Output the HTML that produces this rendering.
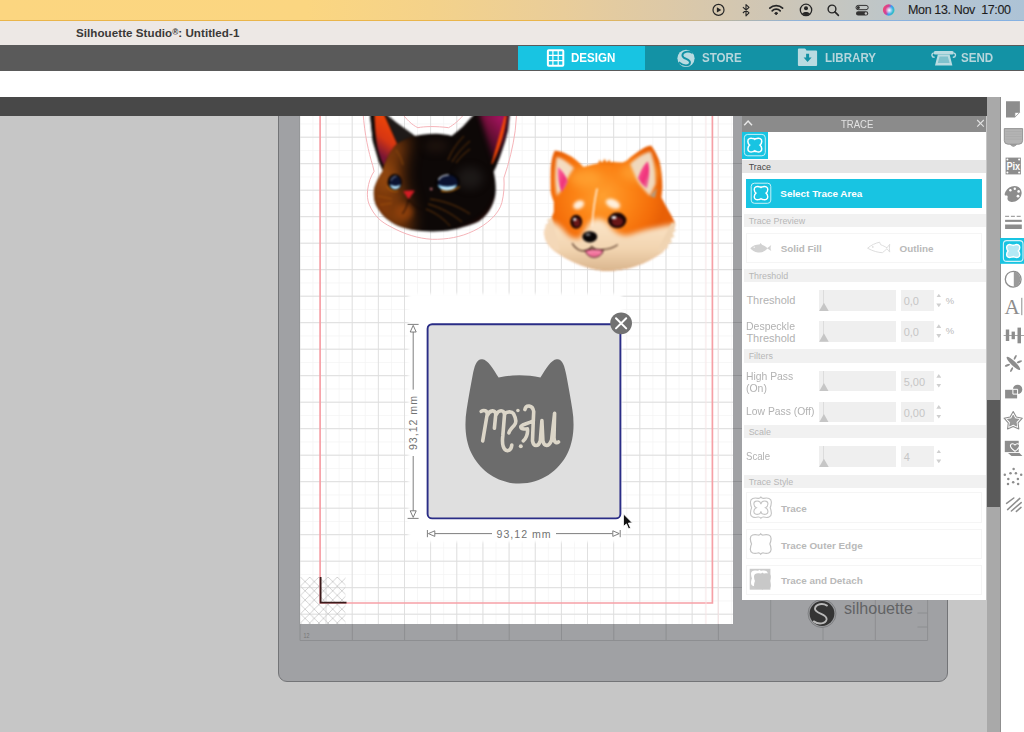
<!DOCTYPE html>
<html lang="en">
<head>
<meta charset="utf-8">
<title>Silhouette Studio: Untitled-1</title>
<style>
*{box-sizing:border-box;margin:0;padding:0}
html,body{width:1024px;height:732px;overflow:hidden;background:#c6c6c6;font-family:"Liberation Sans",sans-serif;}
#root{position:relative;width:1024px;height:732px;overflow:hidden;background:#c6c6c6}
.abs{position:absolute}
#menubar{left:0;top:0;width:1024px;height:21px;background:linear-gradient(90deg,#fcd680 0,#fbd681 30%,#f4d28a 42%,#e9cd9a 55%,#ddc9a7 65%,#cfc6b5 75%,#c0c6c6 85%,#b4c5d3 93%,#adc3d6 100%);border-bottom:1px solid transparent;border-image:linear-gradient(90deg,#eab54a 0,#eab54a 55%,#c9b58a 68%,#8fb3dc 78%,#86b1e2 100%) 1}
#menubar .clock{position:absolute;top:3px;font-size:12.5px;color:#1d1d1d;letter-spacing:-.36px;white-space:nowrap;-webkit-text-stroke:.1px #1d1d1d}
#titlebar{left:0;top:21px;width:1024px;height:24px;background:#ede8e5}
#titlebar span{position:absolute;left:76px;top:5px;font-size:11.6px;font-weight:bold;color:#3a3938;white-space:nowrap;letter-spacing:.05px}
#navbar{left:0;top:45px;width:1024px;height:25.5px;background:#5a5a5a}
#tabs{left:518px;top:45.7px;width:506px;height:24.5px;background:#1392a5}
#tab-design{left:518px;top:45.7px;width:127px;height:24.5px;background:#18c4e2}
.tabtxt{position:absolute;top:50.3px;font-size:13.4px;font-weight:bold;color:#b6d6dc;white-space:nowrap;transform-origin:0 50%;transform:scaleX(.865)}
#toolbar1{left:0;top:70.5px;width:1024px;height:26px;background:#fff}
#toolbar2{left:0;top:96.5px;width:987px;height:19.5px;background:#484848}
#vscroll{left:987px;top:96.5px;width:14px;height:636px;background:#a9a9a9;border-right:1px solid #8f8f8f}
#vthumb{left:987px;top:400px;width:13px;height:107px;background:#5b5b5b}
#righttools{left:1001px;top:96.5px;width:23px;height:636px;background:#fff}
#mat{left:277.9px;top:-20px;width:670.4px;height:702px;background:#a0a1a4;border:1.2px solid #737477;border-radius:0 0 9px 9px}
#page{left:299.5px;top:116px;width:433.5px;height:508px;background:#fff;overflow:hidden}

#panel{left:742px;top:116.3px;width:244.4px;height:483.6px;background:#fff}
#phead{left:0;top:0;width:244.4px;height:15.4px;background:#8b8b8b}
#phead .t{position:absolute;left:99.3px;top:1.6px;font-size:10.6px;color:#e3e3e3;transform-origin:0 50%;transform:scaleX(.9)}
.sec{position:absolute;left:1.5px;width:242px;height:13.2px;background:#f1f1f1;color:#b7b7b7;font-size:8.9px;line-height:14.2px;padding-left:5.2px;white-space:nowrap;overflow:hidden}
.lbl{position:absolute;left:4.4px;font-size:11px;line-height:11.8px;color:#b2b2b2;white-space:nowrap;transform-origin:0 50%}
.lbl i{font-style:normal;display:inline-block;transform-origin:0 50%}
.sl{position:absolute;left:77.3px;width:76.3px;height:20.8px;background:#efefef}
.sl:before{content:"";position:absolute;left:4.2px;top:0;width:1px;height:14px;background:#dcdcdc}
.sl:after{content:"";position:absolute;left:-0.2px;bottom:0;width:9.6px;height:8.4px;background:#c6c6c6;clip-path:polygon(50% 0,100% 100%,0 100%)}
.vb{position:absolute;left:158.9px;width:33.5px;height:20.8px;background:#f0f0f0;color:#c6c6c6;font-size:11px;line-height:23.2px;padding-left:2.8px;white-space:nowrap}
.ar{position:absolute;left:194.3px;width:5px;height:3.8px;background:#cfcfcf}
.ar.u{clip-path:polygon(50% 0,100% 100%,0 100%)}
.ar.d{clip-path:polygon(0 0,100% 0,50% 100%)}
.pct{position:absolute;left:203.8px;font-size:9.4px;color:#b9b9b9;margin-top:1.4px}
.box{position:absolute;left:4.3px;width:236px;background:#fff;border:1px solid #f5f5f5}
.btxt{position:absolute;font-size:9.9px;font-weight:bold;color:#b9b9b9;white-space:nowrap}
</style>
</head>
<body>
<div id="root">
  <div id="mat" class="abs"></div>
  <svg id="matsvg" class="abs" style="left:278.5px;top:-20px" width="669.5" height="702" viewBox="0 0 669.5 702">
    <path d="M21.0 0V660.5M73.3 0V660.5M125.6 0V660.5M177.9 0V660.5M230.2 0V660.5M282.5 0V660.5M334.8 0V660.5M387.1 0V660.5M439.4 0V660.5M491.7 0V660.5M544.0 0V660.5M596.3 0V660.5M648.6 0V660.5M21 660.5H648.6M21 607.5H648.6M21 554.5H648.6M21 501.5H648.6M21 448.5H648.6M21 395.5H648.6M21 342.5H648.6M21 289.5H648.6M21 236.5H648.6M21 183.5H648.6M21 130.5H648.6M21 77.5H648.6M21 24.5H648.6" stroke="#8b8c8f" stroke-width="0.9" fill="none"/>
    <path d="M638.5 633H648.6M638.5 647H648.6" stroke="#8b8c8f" stroke-width="0.9" fill="none"/>
    <text x="24.5" y="657.6" font-size="6.5" fill="#777" font-family="Liberation Sans, sans-serif" textLength="6" lengthAdjust="spacingAndGlyphs">12</text>
    <circle cx="543" cy="633.5" r="14" fill="#9a9b9e" stroke="#77787b" stroke-width="0.8"/>
    <circle cx="543" cy="633.5" r="12.4" fill="#343434"/>
    <path d="M548 625.6C544 623 536.8 623.6 536 628.4C535.2 634 548.4 633.4 547.6 639.4C546.8 644 539.4 644.6 534.8 641.4" fill="none" stroke="#b9b9b9" stroke-width="1.9" stroke-linecap="round"/>
    <text x="565" y="634.3" font-size="16.5" fill="#626365" font-family="Liberation Sans, sans-serif" textLength="69" lengthAdjust="spacingAndGlyphs">silhouette</text>
  </svg>

  <div id="page" class="abs"></div>
  <svg id="pagesvg" class="abs" style="left:299.5px;top:116px" width="433.5" height="508" viewBox="0 0 433.5 508">
    <defs>
      <pattern id="gmin" x="-0.6" y="20.7" width="13.075" height="13.25" patternUnits="userSpaceOnUse">
        <path d="M0.3 0V13.25M0 0.3H13.075" stroke="#f4f4f4" stroke-width="0.9" fill="none"/>
      </pattern>
      <pattern id="gmaj" x="-0.6" y="20.7" width="26.15" height="26.5" patternUnits="userSpaceOnUse">
        <path d="M0.3 0V26.5M0 0.3H26.15" stroke="#dddddd" stroke-width="1.15" fill="none"/>
      </pattern>
      <pattern id="hatch" x="0.5" y="461" width="9.2" height="9.2" patternUnits="userSpaceOnUse">
        <path d="M0 0L9.2 9.2M9.2 0L0 9.2" stroke="#cfcfcf" stroke-width="0.9" fill="none"/>
      </pattern>
      <filter color-interpolation-filters="sRGB" id="soft" x="-10%" y="-10%" width="120%" height="120%"><feGaussianBlur stdDeviation="1.6"/></filter>
    </defs>
    <rect width="433.5" height="508" fill="#fff"/>
    <rect width="433.5" height="508" fill="url(#gmin)"/>
    <rect width="433.5" height="508" fill="url(#gmaj)"/>
    <rect x="0.5" y="461" width="45" height="47" fill="url(#hatch)"/>
    <path d="M20.1 -2V487H412.4V-2" fill="none" stroke="#f6a0a6" stroke-width="1.7"/>
    <path d="M406 0V508M418.3 0V508" stroke="#f9e3e4" stroke-width="0.8" fill="none"/>
    <path d="M20.6 461V486.6H46.5" fill="none" stroke="#3a1a1a" stroke-width="1.8"/>
    <rect x="108.5" y="177.6" width="213.5" height="248.4" fill="#fff" filter="url(#soft)"/>
  </svg>



  <svg id="art" class="abs" style="left:0;top:0" width="1024" height="732" viewBox="0 0 1024 732">
    <defs>
      <filter color-interpolation-filters="sRGB" id="b05" x="-5%" y="-5%" width="110%" height="110%"><feGaussianBlur stdDeviation="0.45"/></filter>
      <filter color-interpolation-filters="sRGB" id="b1" x="-20%" y="-20%" width="140%" height="140%"><feGaussianBlur stdDeviation="1"/></filter>
      <filter color-interpolation-filters="sRGB" id="b2" x="-60%" y="-60%" width="220%" height="220%"><feGaussianBlur stdDeviation="2.4"/></filter>
      <filter color-interpolation-filters="sRGB" id="b8" x="-100%" y="-100%" width="300%" height="300%"><feGaussianBlur stdDeviation="8"/></filter>
      <filter color-interpolation-filters="sRGB" id="b4" x="-100%" y="-100%" width="300%" height="300%"><feGaussianBlur stdDeviation="4.5"/></filter>
      <clipPath id="catclip"><path d="M369.7 112L372.8 141L378.9 161.5L383 170.7C378 178 374 186 373.8 192.2C373.6 198 375 203 376.9 206.6C380 212 383 216 387.1 218.9C392 222.5 396 225 401.5 227C408 229.3 415 230.6 422 231.1C429 231.6 436 231.6 442.5 231.1C450 230.4 457 229 463 227C469 225.2 475 223.4 479.3 220.9C485 217 489 212 491.6 206.6C494 201.5 495.6 196 495.7 190.2C495.8 184 495 178 493.7 171.7C497 165 499.6 158 501.9 151.2C504.4 144.4 506.4 137.6 508 130.7L510.1 112L476.3 112C471.6 117 467.4 121.8 463 126.6C459.4 130 455.6 133 451.7 135.9C446.6 134.6 441.4 134 436.3 133.8C431.5 133.8 426.7 134.2 422 134.8L414.8 135.9C410.4 133 406 130 401.5 126.6C396 122.4 390 118 384 112Z"/></clipPath>
      <linearGradient id="catg" x1="374" y1="0" x2="496" y2="0" gradientUnits="userSpaceOnUse">
        <stop offset="0" stop-color="#5a2808"/><stop offset=".12" stop-color="#6a300a"/><stop offset=".27" stop-color="#341606"/><stop offset=".4" stop-color="#100806"/><stop offset="1" stop-color="#0b0706"/>
      </linearGradient>
      <linearGradient id="earL" x1="392" y1="126" x2="374" y2="150" gradientUnits="userSpaceOnUse">
        <stop offset="0" stop-color="#ea420a"/><stop offset=".5" stop-color="#d63612"/><stop offset="1" stop-color="#7a1636"/>
      </linearGradient>
      <linearGradient id="earR" x1="474" y1="146" x2="506" y2="118" gradientUnits="userSpaceOnUse">
        <stop offset="0" stop-color="#1c0810"/><stop offset=".6" stop-color="#78103e"/><stop offset="1" stop-color="#b0146a"/>
      </linearGradient>
      <radialGradient id="eyeb" cx=".45" cy=".4" r=".6"><stop offset="0" stop-color="#0a1030"/><stop offset=".5" stop-color="#1c4a9a"/><stop offset="1" stop-color="#58b8f0"/></radialGradient>
    </defs>

    <!-- dog -->
    <defs>
      <clipPath id="dogclip"><path d="M554.8 150.5C552 156 550.9 164 550.7 171C550.5 178 550.6 185 550.7 191.5C551.4 195 552.4 198.6 553.8 201.7L553.8 212C552.6 215 551.6 217.6 550.7 220.2C547 224 544.8 228 544.6 232.5C544.6 237 546 241 548.7 244.8C552 249 556 252.4 561 255C567 259 574 262.6 581.5 265.2C588 267.6 595 269.6 602 270.4C609 271 616 270.6 622.5 269.3C630 267.8 637 265.8 643 263.2C651 259.8 658 255.6 663.4 250.9C667.4 246.6 670.2 241.8 671.6 236.6C673.6 231.8 674.9 227 674.7 222.2L671.6 216C668 210 664.6 204 661.4 197.6L662.4 187.4C662.4 178 661.4 169 659.3 160.7C657 154.6 654.2 149.4 651.1 145.4C648 145.8 645.4 146.8 643 148.4C637 151.8 631.6 156 626.6 160.7L622.5 162.6C615.6 161.8 608.8 161.8 602 162.6C595.6 163.6 589.4 165.4 583.5 166.9C579.6 163 575.6 159.6 571.2 156.6C566 153.4 560.6 151.2 554.8 150.5Z"/></clipPath>
      <radialGradient id="dogo" cx="603" cy="196" r="62" gradientUnits="userSpaceOnUse">
        <stop offset="0" stop-color="#ffa030"/><stop offset=".45" stop-color="#fc8416"/><stop offset=".8" stop-color="#f46e0a"/><stop offset="1" stop-color="#e86006"/>
      </radialGradient>
      <linearGradient id="dogc" x1="0" y1="222" x2="0" y2="272" gradientUnits="userSpaceOnUse">
        <stop offset="0" stop-color="#fbe4c6"/><stop offset=".55" stop-color="#f2d4b0"/><stop offset="1" stop-color="#d8b48c"/>
      </linearGradient>
      <linearGradient id="earp" x1="0" y1="0" x2="1" y2="1"><stop offset="0" stop-color="#ff6aa0"/><stop offset=".6" stop-color="#f0307a"/><stop offset="1" stop-color="#e8a0b0"/></linearGradient>
    </defs>
    <g filter="url(#b1)">
      <path d="M554.8 150.5C552 156 550.9 164 550.7 171C550.5 178 550.6 185 550.7 191.5C551.4 195 552.4 198.6 553.8 201.7L553.8 212C552.6 215 551.6 217.6 550.7 220.2C547 224 544.8 228 544.6 232.5C544.6 237 546 241 548.7 244.8C552 249 556 252.4 561 255C567 259 574 262.6 581.5 265.2C588 267.6 595 269.6 602 270.4C609 271 616 270.6 622.5 269.3C630 267.8 637 265.8 643 263.2C651 259.8 658 255.6 663.4 250.9C667.4 246.6 670.2 241.8 671.6 236.6C673.6 231.8 674.9 227 674.7 222.2L671.6 216C668 210 664.6 204 661.4 197.6L662.4 187.4C662.4 178 661.4 169 659.3 160.7C657 154.6 654.2 149.4 651.1 145.4C648 145.8 645.4 146.8 643 148.4C637 151.8 631.6 156 626.6 160.7L622.5 162.6C615.6 161.8 608.8 161.8 602 162.6C595.6 163.6 589.4 165.4 583.5 166.9C579.6 163 575.6 159.6 571.2 156.6C566 153.4 560.6 151.2 554.8 150.5Z" fill="url(#dogo)"/>
      <g clip-path="url(#dogclip)">
        <!-- cream lower face -->
        <path d="M538 222C548 218 556 222 562 228C568 236 574 240 580 238C585 230 588 222 594 219C600 217 606 220 610 226C616 234 624 237 632 234C642 230 656 227 682 223L684 280L536 280Z" fill="url(#dogc)" filter="url(#b2)"/>
        <ellipse cx="640" cy="172" rx="20" ry="10" fill="#ffa838" opacity=".7" filter="url(#b4)"/>
        <ellipse cx="585" cy="178" rx="16" ry="9" fill="#ffa838" opacity=".7" filter="url(#b4)"/>
        <!-- inner ears -->
        <path d="M556.6 157C562 158 568 162 574 168C570 174 566 180 563 188L557 196C554.6 184 554.8 170 556.6 157Z" fill="#f4dcc0" filter="url(#b1)"/>
        <path d="M558 167C562.4 170.6 566 176 567.8 181.6C566.4 185.6 564 189.4 561.4 192C558.8 185 557.6 176 558 167Z" fill="url(#earp)" filter="url(#b05)"/>
        <path d="M630 164C636 158 644 153 650.6 151.6C654 160 655.6 172 655.6 184L650 196C646 192 640 186 636 178Z" fill="#f0d8bc" filter="url(#b1)"/>
        <path d="M638 178C640.6 170 644.6 163.6 647.8 161.4C650 168 649.6 178 647 188.6C643.4 186 640 182 638 178Z" fill="url(#earp)" filter="url(#b05)"/>
        <path d="M650 196L657 188L655 198Z" fill="#b89878"/>
        <!-- brow spots -->
        <ellipse cx="578.6" cy="204.8" rx="5.8" ry="4" fill="#fff0dc" transform="rotate(-28 578.6 204.6)" filter="url(#b1)"/>
        <ellipse cx="613" cy="203.4" rx="7.6" ry="4.4" fill="#fff0dc" transform="rotate(24 612 203.6)" filter="url(#b1)"/>
        <path d="M597 189C594.6 200 593 212 592 226" fill="none" stroke="#fff4e4" stroke-width="1.4" stroke-linecap="round"/>
      </g>
<path d="M552 217L546.5 220.4L550 222L544.6 225.4L548.6 227L543.4 230.4L547.6 232L543.6 236L548 237L545.4 241.6L550 242L548.6 246.6L553.6 246.6L553 250.6L560 250Z" fill="#f4d8b8"/>
      <path d="M672 222L676.4 225L672.6 227L676 231L672 232.6L674.6 237L670.4 238L672 243L667.6 243.6L668 248.6L663.6 248L663 253L657 251Z" fill="#f0d4b2"/>
      <path d="M598 164L599.6 159.8L602 163L604.6 158.8L606.6 162.6L609.6 159.4L610.6 163.4L614.6 161.2L614 165.4Z" fill="#f4780e"/>
      <!-- eyes -->
      <ellipse cx="576.2" cy="221.8" rx="6" ry="7" fill="#1c0606"/>
      <ellipse cx="576.8" cy="222.6" rx="3.4" ry="4.2" fill="#6a1818"/>
      <ellipse cx="574.8" cy="219.4" rx="1.6" ry="1.3" fill="#fff"/>
      <ellipse cx="617.2" cy="220.4" rx="9.2" ry="7.8" fill="#1c0606"/>
      <ellipse cx="617.4" cy="221.6" rx="5.6" ry="4.4" fill="#6a1818"/>
      <ellipse cx="614" cy="217.6" rx="2.6" ry="1.5" fill="#fff"/>
      <!-- nose / mouth -->
      <ellipse cx="589.8" cy="236.8" rx="7.4" ry="5.6" fill="#0a0606"/>
      <ellipse cx="588" cy="234.6" rx="2.6" ry="1.2" fill="#8a8a90"/>
      <path d="M572.2 243.2C575 249 581 251.6 584.3 250.6C588 250 590.6 248.6 591.8 246.6C594 249 597 250.4 601 249.7C608 249.4 614 247.6 617.8 244.6" fill="none" stroke="#4a2a1c" stroke-width="1.2"/>
      <path d="M585 250.8C589 248.8 598 248.6 603.2 250.4C602 258 589 261 585 250.8Z" fill="#f2709a" stroke="#3a1418" stroke-width="0.9"/><path d="M588 253C592 251.4 597 251.4 600.6 252.6" fill="none" stroke="#f8a0bc" stroke-width="1"/>
    </g>
    <!-- cat cut line -->
    <path d="M363 112C364.6 135 368.6 152 372.7 165.5L374.1 171.3C371 176 368.6 182 367.6 190C367 196 367.6 200 369 204C374 216 381 222 391.2 227C404 234 418 238.6 432.2 239.3C447 239.6 461 237 473.2 231.1C487 224.6 499 214 501.9 202.5C504 194 504.4 186 503.9 177.9C509 163 513 147 515.2 130.7L516.8 112M401 112C406 119 412 125 417.9 127.7C424 126.4 436 126 448.6 127.7C454 124.6 459 120.6 466 112" fill="none" stroke="#f6b4b9" stroke-width="1"/>
    <!-- cat -->
    <g filter="url(#b1)">
      <path d="M369.7 112L372.8 141L378.9 161.5L383 170.7C378 178 374 186 373.8 192.2C373.6 198 375 203 376.9 206.6C380 212 383 216 387.1 218.9C392 222.5 396 225 401.5 227C408 229.3 415 230.6 422 231.1C429 231.6 436 231.6 442.5 231.1C450 230.4 457 229 463 227C469 225.2 475 223.4 479.3 220.9C485 217 489 212 491.6 206.6C494 201.5 495.6 196 495.7 190.2C495.8 184 495 178 493.7 171.7C497 165 499.6 158 501.9 151.2C504.4 144.4 506.4 137.6 508 130.7L510.1 112L476.3 112C471.6 117 467.4 121.8 463 126.6C459.4 130 455.6 133 451.7 135.9C446.6 134.6 441.4 134 436.3 133.8C431.5 133.8 426.7 134.2 422 134.8L414.8 135.9C410.4 133 406 130 401.5 126.6C396 122.4 390 118 384 112Z" fill="#0d0807"/>
      <g clip-path="url(#catclip)">
        <!-- brown left face -->
        <path d="M356 168L392 136L410 136C404 156 401 172 404 188C408 204 414 214 410 236L376 236L354 204Z" fill="#7c3a0c" filter="url(#b8)"/>
        <ellipse cx="386" cy="178" rx="9" ry="14" fill="#964a10" opacity=".75" filter="url(#b4)"/>
        <ellipse cx="404" cy="212" rx="9" ry="8" fill="#94420c" opacity=".8" filter="url(#b2)"/>
        <ellipse cx="383" cy="206" rx="7" ry="9" fill="#80380a" opacity=".7" filter="url(#b2)"/>
        <path d="M372 200C376 214 388 224 404 230L380 236L366 214Z" fill="#2a0e04" opacity=".8" filter="url(#b2)"/>
        <!-- left ear -->
        <path d="M368 112L393 112L415.6 135C407 138 401 141 397 143.5C391 149 386 158 382.2 171L378 162L372 141Z" fill="#0e0a09"/><path d="M384 112L393 112L415.6 135C407 138 401 141 397.4 143.2Z" fill="#1e1a18" filter="url(#b05)"/>
        <path d="M374.4 112L383 112L397 143.5C392 148 387 157 383.7 165.5C380 158 377.4 150 376.4 141C375.2 132 374.6 122 374.4 112Z" fill="url(#earL)" filter="url(#b05)"/>
        <!-- right ear -->
        <path d="M479 112L507 112L504 138L494 162C490 150 486 136 479 112Z" fill="url(#earR)" filter="url(#b2)"/>
        <path d="M506.2 116C504 134 498.6 150 492 163.6C495.6 150 500.6 134 505 116Z" fill="#fa4a06" stroke="#fa4a06" stroke-width="1" filter="url(#b05)"/>
        <!-- gloss -->
        <ellipse cx="470" cy="178" rx="13" ry="11" fill="#2c2928" opacity=".5" filter="url(#b4)"/>
        <ellipse cx="436" cy="146" rx="12" ry="6" fill="#2a1a12" opacity=".6" filter="url(#b4)"/>
        <path d="M496 196C492 212 478 224 456 230L470 236L500 214Z" fill="#3a0c06" opacity=".7" filter="url(#b2)"/>
      </g>
      <!-- eyes -->
      <ellipse cx="394.8" cy="182.2" rx="7.2" ry="8.2" fill="#080404"/>
      <path d="M387.4 186Q391 192.6 398 190.4" fill="none" stroke="#c06a0a" stroke-width="1.1"/>
      <ellipse cx="395.2" cy="182.2" rx="5.6" ry="6.6" fill="#0a1230"/>
      <path d="M389.8 184.6Q395.4 187.6 400.6 184.4Q399.6 189.2 394.8 189.2Q390.6 188.8 389.8 184.6Z" fill="#8fd8ff"/>
      <path d="M391.6 186.6Q395.4 188.6 399 186.6" fill="none" stroke="#f2fbff" stroke-width="1"/>
      <path d="M391 180.4Q392 176.8 396 176.2" fill="none" stroke="#aab4c8" stroke-width="1" stroke-linecap="round" opacity=".8"/>
      <ellipse cx="447.4" cy="182.4" rx="12.4" ry="9" fill="#050303" transform="rotate(-6 447.4 182.4)"/>
      <path d="M441 190.6Q451 193.4 459.6 186.6" fill="none" stroke="#c87008" stroke-width="1.2"/>
      <ellipse cx="447.8" cy="182.2" rx="10" ry="7.4" fill="#0a1230"/>
      <path d="M437.6 184.8Q447.6 188.4 457 184.8Q455.6 190.4 446.6 190.6Q439.4 190.2 437.6 184.8Z" fill="#8fd8ff"/>
      <path d="M440.6 187.4Q447.6 190 454.6 187.2" fill="none" stroke="#f2fbff" stroke-width="1.3"/>
      <path d="M438.6 179.6Q441 175.2 448.4 174.8" fill="none" stroke="#d8e0ee" stroke-width="1.3" stroke-linecap="round" opacity=".9"/>
      <circle cx="431.2" cy="189" r="1.2" fill="#d87880"/>
      <!-- nose -->
      <path d="M403.2 191.2C407 190.2 411 190.2 414.8 190.8L408.6 199.2Z" fill="#d41c24"/>
      <path d="M408.4 199C407.4 205 405.4 210 402.4 214M408.4 199C412 205 417 208 422 210" stroke="#120604" stroke-width="0.9" fill="none"/>
      <g fill="none" stroke="#b8620e" stroke-width="0.6" opacity=".9">
        <path d="M430 199C445 201 458 206 470 214M428 204C442 208 452 214 462 222M426 209C436 213 444 219 450 226"/>
        <path d="M448 160C452 150 458 142 464 136M452 162C458 152 464 146 470 141M456 163C460 157 466 152 470 149"/>
        <path d="M396 150C400 155 402 160 403 165M392 199L378 196M392 203L380 205"/>
      </g>
    </g>
  
    <!-- trace selection -->
    <rect x="427.6" y="324.2" width="192.8" height="194.2" rx="4.5" fill="#dfdfdf" stroke="#2a2d86" stroke-width="1.9"/>
    <g filter="url(#b05)">
    <path d="M482.3 359.2C476.6 358.6 474.4 366 472.6 375.4C470.6 386 468.4 398 466.6 410C464.4 424 465 440 471.6 453.6C480 470.6 497.6 483.6 519.4 483.6C541.4 483.6 559 470.6 567.4 453.6C574 440 574.6 424 572.4 410C570.6 398 568.4 386 566.4 375.4C564.6 366 562.4 358.6 556.7 359.2C551 359.8 545.6 369 540.4 377.6C533.6 376 526.6 375.2 519.4 375.2C512.4 375.2 505.4 376 498.6 377.6C493.4 369 488 359.8 482.3 359.2Z" fill="#6c6c6c"/>
    <g fill="none" stroke="#dcd6c8" stroke-width="3.6" stroke-linecap="round" stroke-linejoin="round" aria-label="meow">
      <title>meow</title>
      <path d="M481.2 411.4C483.7 409.6 487.4 410.6 487.2 414.3L482.7 440.9M487.4 415.5C489.5 409.6 496.0 409.2 495.7 415.0L494.4 428.2M496.0 415.0C498.3 409.6 504.4 409.2 504.5 415.0L502.8 436.0C501.8 443.8 503.2 450.9 507.6 450.7C510.0 450.3 511.6 447.7 511.8 445.0M504.5 414.0C507.1 411.1 512.0 411.4 513.6 413.8C515.7 417.7 516.7 422.8 514.1 425.5C512.0 427.7 509.6 430.2 508.9 432.9M524.9 409.6C525.9 404.6 532.7 404.6 533.7 411.6L533.3 420.4L532.5 440.9C533.5 447.0 538.4 447.0 540.3 440.9L541.9 420.6M533.3 420.6C529.6 423.3 523.5 423.9 521.0 426.2C519.8 428.7 524.7 429.4 527.4 428.8C528.2 434.1 525.7 438.9 523.3 440.9M541.9 420.6L542.9 440.9C544.2 447.0 549.3 447.0 551.6 439.9L554.6 413.4L554.0 438.0C554.4 443.0 556.9 443.4 558.5 441.9"/>
    </g>
    <g fill="#dcd6c8"><circle cx="517.9" cy="410.6" r="1.75"/><circle cx="520.8" cy="446.3" r="2"/></g>
    </g>
    <!-- dimension arrows -->
    <g fill="none" stroke="#707070" stroke-width="0.9">
      <path d="M407.6 324.4H418.6M407.6 518.4H418.6M413.2 332V389.6M413.2 456V511"/>
      <path d="M413.2 325.4L410.2 332H416.2Z" fill="#fff"/>
      <path d="M413.2 517.4L410.2 510.8H416.2Z" fill="#fff"/>
      <path d="M427.4 530V537.2M620.2 530V537.2M435 533.6H492M556 533.6H612.6"/>
      <path d="M428.4 533.6L434.8 530.8V536.4Z" fill="#fff"/>
      <path d="M619.2 533.6L612.8 530.8V536.4Z" fill="#fff"/>
    </g>
    <text x="496.6" y="538" font-size="10.6" fill="#727272" font-family="Liberation Sans, sans-serif" textLength="54" lengthAdjust="spacing">93,12 mm</text>
    <text transform="translate(417.4 450) rotate(-90)" font-size="10.6" fill="#727272" font-family="Liberation Sans, sans-serif" textLength="54" lengthAdjust="spacing">93,12 mm</text>
    <!-- close button -->
    <circle cx="621.1" cy="323.3" r="10.9" fill="#727272"/>
    <path d="M616 318.2L626.2 328.4M626.2 318.2L616 328.4" stroke="#fff" stroke-width="2" stroke-linecap="round"/>
    <!-- cursor -->
    <path d="M623.4 513.8L623.4 526.6L626.4 523.9L628.6 529L630.6 528.1L628.4 523.1L632.4 522.9Z" fill="#111" stroke="#fff" stroke-width="0.9" stroke-linejoin="round"/>
  </svg>
<div id="panel" class="abs">
<div id="phead" class="abs"><span class="t">TRACE</span></div>
<div class="abs" id="picon" style="left:0;top:15.4px;width:26px;height:27.2px;background:#18c4e2"></div>
<div class="sec" style="top:43.5px;left:0;width:243.5px;padding-left:6.7px;background:#e5e5e5;color:#4a4a4a">Trace</div>
<div class="abs" id="selbtn" style="left:4.3px;top:62.6px;width:236px;height:29px;background:#18c4e2"><span class="btxt" style="left:34px;top:9.2px;color:#fff">Select Trace Area</span></div>
<div class="sec" style="top:97.9px">Trace Preview</div>
<div class="box" style="top:116.5px;height:30.5px"><span class="btxt" style="left:33.4px;top:9.6px">Solid Fill</span><span class="btxt" style="left:152.2px;top:9.6px">Outline</span></div>
<div class="sec" style="top:152.5px">Threshold</div>
<div class="lbl" style="top:178.9px">Threshold</div><div class="sl" style="top:174.0px"></div><div class="vb" style="top:174.0px">0,0</div><div class="ar u" style="top:177.4px"></div><div class="ar d" style="top:187.2px"></div><div class="pct" style="top:177.2px">%</div>
<div class="lbl" style="top:204.9px"><i style="transform:scaleX(.955)">Despeckle</i><br>Threshold</div><div class="sl" style="top:204.6px"></div><div class="vb" style="top:204.6px">0,0</div><div class="ar u" style="top:208.0px"></div><div class="ar d" style="top:217.8px"></div><div class="pct" style="top:207.8px">%</div>
<div class="sec" style="top:233.1px">Filters</div>
<div class="lbl" style="top:254.6px"><i style="transform:scaleX(.942)">High Pass</i><br><i style="transform:scaleX(.95)">(On)</i></div><div class="sl" style="top:254.3px"></div><div class="vb" style="top:254.3px">5,00</div><div class="ar u" style="top:257.7px"></div><div class="ar d" style="top:267.5px"></div>
<div class="lbl" style="top:290.2px"><i style="transform:scaleX(.942)">Low Pass (Off)</i></div><div class="sl" style="top:285.3px"></div><div class="vb" style="top:285.3px">0,00</div><div class="ar u" style="top:288.7px"></div><div class="ar d" style="top:298.5px"></div>
<div class="sec" style="top:308.5px">Scale</div>
<div class="lbl" style="top:334.9px"><i style="transform:scaleX(.875)">Scale</i></div><div class="sl" style="top:330.0px"></div><div class="vb" style="top:330.0px">4</div><div class="ar u" style="top:333.4px"></div><div class="ar d" style="top:343.2px"></div>
<div class="sec" style="top:358.3px">Trace Style</div>
<div class="box" style="top:376.1px;height:31px"><span class="btxt" style="left:33.6px;top:9.9px">Trace</span></div>
<div class="box" style="top:413.0px;height:30px"><span class="btxt" style="left:33.6px;top:9.8px">Trace Outer Edge</span></div>
<div class="box" style="top:448.7px;height:30.4px"><span class="btxt" style="left:33.6px;top:9.1px">Trace and Detach</span></div>

<svg class="abs" style="left:0;top:0" width="244.4" height="483.1" viewBox="742 116.3 244.4 483.1">
  <path d="M744.2 125.6L748.1 121.4L752 125.6" fill="none" stroke="#e8e8e8" stroke-width="1.5"/>
  <path d="M977.2 120.3L983.8 127M983.8 120.3L977.2 127" fill="none" stroke="#e2e2e2" stroke-width="1.1"/>
  <rect x="744.3" y="134.7" width="21" height="21.4" rx="3.4" fill="none" stroke="#c9f0f8" stroke-width="1"/>
  <path d="M754.80 139.63Q755.38 139.04 756.62 138.89C759.18 138.15 761.95 138.74 761.73 141.70C761.66 143.18 761.37 144.51 760.06 145.40C761.37 146.29 761.66 147.62 761.73 149.10C761.95 152.06 759.18 152.65 756.62 151.91Q755.38 151.76 754.80 151.17Q754.22 151.76 752.97 151.91C750.42 152.65 747.65 152.06 747.87 149.10C747.94 147.62 748.23 146.29 749.54 145.40C748.23 144.51 747.94 143.18 747.87 141.70C747.65 138.74 750.42 138.15 752.97 138.89Q754.22 139.04 754.80 139.63Z" fill="none" stroke="#fff" stroke-width="1.5"/>
  <rect x="751.2" y="183.5" width="19.6" height="20.1" rx="3.2" fill="none" stroke="#c9f0f8" stroke-width="1"/>
  <path d="M761.00 187.78Q761.57 187.21 762.77 187.06C765.26 186.34 767.96 186.92 767.75 189.80C767.67 191.24 767.39 192.54 766.11 193.40C767.39 194.26 767.67 195.56 767.75 197.00C767.96 199.88 765.26 200.46 762.77 199.74Q761.57 199.59 761.00 199.02Q760.43 199.59 759.23 199.74C756.74 200.46 754.04 199.88 754.25 197.00C754.33 195.56 754.61 194.26 755.89 193.40C754.61 192.54 754.33 191.24 754.25 189.80C754.04 186.92 756.74 186.34 759.23 187.06Q760.43 187.21 761.00 187.78Z" fill="none" stroke="#fff" stroke-width="1.4"/>
  <path d="M750.3 248.5C753 245.6 757 244.6 759.5 244.8L760.6 243.2L762 245C764.5 245.8 766 247.2 767.4 248.2L771.3 245.3C770.3 247.3 770.3 249.3 771.3 251.2L767.4 248.9C765 251.6 762 253.3 758 252.7C754.5 252.2 752 250.6 750.3 248.5Z" fill="#d2d2d2"/>
  <circle cx="754.2" cy="247.6" r="0.8" fill="#f4f4f4"/>
  <path d="M867.6 248.5C871 245.4 875.6 243.4 879.6 242.5L880.6 245C883 245.8 885.4 247.2 887 248.1L889.7 244.6C889.3 247.2 889.3 249.8 889.7 252.4L887 249C885.4 250.4 884 251.8 882.4 253C878 252.8 872.6 251.4 867.6 248.5Z" fill="none" stroke="#dadada" stroke-width="0.9" stroke-linejoin="round"/>
  <circle cx="872.8" cy="247.2" r="0.9" fill="#dedede"/>
  <path d="M760.90 497.40Q761.78 498.88 763.65 498.67C767.50 497.61 771.68 498.46 771.35 502.70C771.24 504.82 770.80 506.73 770.14 508.00C770.80 509.27 771.24 511.18 771.35 513.30C771.68 517.54 767.50 518.39 763.65 517.33Q761.78 517.12 760.90 518.60Q760.02 517.12 758.15 517.33C754.30 518.39 750.12 517.54 750.45 513.30C750.56 511.18 751.00 509.27 751.66 508.00C751.00 506.73 750.56 504.82 750.45 502.70C750.12 498.46 754.30 497.61 758.15 498.67Q760.02 498.88 760.90 497.40Z" fill="none" stroke="#c4c4c4" stroke-width="1.1"/>
  <path d="M760.90 504.40Q761.49 501.81 762.75 501.66C765.34 500.94 768.15 501.52 767.93 504.40C767.86 505.84 767.56 507.14 765.49 508.00C767.56 508.86 767.86 510.16 767.93 511.60C768.15 514.48 765.34 515.06 762.75 514.34Q761.49 514.19 760.90 511.60Q760.31 514.19 759.05 514.34C756.46 515.06 753.65 514.48 753.87 511.60C753.94 510.16 754.24 508.86 756.31 508.00C754.24 507.14 753.94 505.84 753.87 504.40C753.65 501.52 756.46 500.94 759.05 501.66Q760.31 501.81 760.90 504.40Z" fill="none" stroke="#c4c4c4" stroke-width="1.1"/>
  <path d="M760.70 534.10Q761.57 535.53 763.43 535.32C767.24 534.30 771.38 535.12 771.06 539.20C770.95 541.24 770.51 543.08 769.86 544.30C770.51 545.52 770.95 547.36 771.06 549.40C771.38 553.48 767.24 554.30 763.43 553.28Q761.57 553.07 760.70 554.50Q759.83 553.07 757.98 553.28C754.16 554.30 750.02 553.48 750.35 549.40C750.45 547.36 750.89 545.52 751.54 544.30C750.89 543.08 750.45 541.24 750.35 539.20C750.02 535.12 754.16 534.30 757.98 535.32Q759.83 535.53 760.70 534.10Z" fill="none" stroke="#c2c2c2" stroke-width="1.2"/>
  <rect x="749.7" y="569.1" width="20.7" height="20.9" fill="#cbcbcb"/>
  <path d="M759.40 570.00Q760.10 571.20 761.60 571.03C764.68 570.17 768.02 570.86 767.76 574.30C767.67 576.02 767.32 577.57 766.79 578.60C767.32 579.63 767.67 581.18 767.76 582.90C768.02 586.34 764.68 587.03 761.60 586.17Q760.10 586.00 759.40 587.20Q758.70 586.00 757.20 586.17C754.12 587.03 750.78 586.34 751.04 582.90C751.13 581.18 751.48 579.63 752.01 578.60C751.48 577.57 751.13 576.02 751.04 574.30C750.78 570.86 754.12 570.17 757.20 571.03Q758.70 571.20 759.40 570.00Z" fill="#fff"/>
  <path d="M762.40 572.80Q763.10 574.00 764.60 573.83C767.68 572.97 771.02 573.66 770.76 577.10C770.67 578.82 770.32 580.37 769.79 581.40C770.32 582.43 770.67 583.98 770.76 585.70C771.02 589.14 767.68 589.83 764.60 588.97Q763.10 588.80 762.40 590.00Q761.70 588.80 760.20 588.97C757.12 589.83 753.78 589.14 754.04 585.70C754.13 583.98 754.48 582.43 755.01 581.40C754.48 580.37 754.13 578.82 754.04 577.10C753.78 573.66 757.12 572.97 760.20 573.83Q761.70 574.00 762.40 572.80Z" fill="#c8c8c8"/>
</svg>
</div>
  <div id="menubar" class="abs"><span class="clock" style="left:908px">Mon 13. Nov&nbsp; 17:00</span></div>
  <div id="titlebar" class="abs"><span>Silhouette Studio<b style="font-size:8.2px;position:relative;top:-1.6px">®</b>: Untitled-1</span></div>
  <div id="navbar" class="abs"></div>
  <div id="tabs" class="abs"></div>
  <div id="tab-design" class="abs"></div>
  <span class="tabtxt" style="left:570.5px;color:#fff">DESIGN</span>
  <span class="tabtxt" style="left:701.5px">STORE</span>
  <span class="tabtxt" style="left:824.5px">LIBRARY</span>
  <span class="tabtxt" style="left:961px">SEND</span>

  <svg id="topicons" class="abs" style="left:0;top:0" width="1024" height="72" viewBox="0 0 1024 72">
    <g fill="none" stroke="#262626" stroke-width="1.2">
      <circle cx="718.5" cy="9.9" r="5.5"/>
      <path d="M716.9 7.2V12.6L721.3 9.9Z" fill="#262626" stroke="none"/>
      <path d="M742.9 7.2L749 12.9L746 15.8V4.6L749 7.3L742.9 13" stroke-width="1.1" stroke-linejoin="round"/>
      <path d="M769.8 8.2A9 9 0 0 1 782.6 8.2" stroke-width="1.7" stroke-linecap="round"/>
      <path d="M772.2 10.8A5.6 5.6 0 0 1 780.2 10.8" stroke-width="1.7" stroke-linecap="round"/>
      <path d="M774.6 13.2A2.2 2.2 0 0 1 777.8 13.2L776.2 14.9Z" fill="#262626" stroke-width="0.8"/>
      <circle cx="806" cy="9.9" r="5.7" stroke-width="1.3"/>
      <circle cx="806" cy="8.3" r="2" fill="#262626" stroke="none"/>
      <path d="M802.2 13.6C803 11.4 809 11.4 809.8 13.6C808 15.6 804 15.6 802.2 13.6Z" fill="#262626" stroke="none"/>
      <circle cx="832" cy="9" r="3.9" stroke-width="1.4"/>
      <path d="M834.9 11.9L838.4 15.4" stroke-width="1.6" stroke-linecap="round"/>
    </g>
    <rect x="856" y="5.4" width="12.2" height="4.3" rx="2.15" fill="none" stroke="#333" stroke-width="1"/>
    <circle cx="858.3" cy="7.55" r="1.5" fill="#333"/>
    <rect x="856" y="11.3" width="12.2" height="4.3" rx="2.15" fill="#333"/>
    <circle cx="865.9" cy="13.45" r="1.2" fill="#c6c6c6"/>
    <defs>
      <linearGradient id="siri" x1="0" y1=".3" x2="1" y2=".7">
        <stop offset="0" stop-color="#f0486e"/><stop offset=".4" stop-color="#d0409a"/><stop offset=".6" stop-color="#3d9df2"/><stop offset="1" stop-color="#30c8b8"/>
      </linearGradient>
      <radialGradient id="siric" cx=".5" cy=".5" r=".5"><stop offset="0" stop-color="#fff" stop-opacity=".95"/><stop offset=".45" stop-color="#fff" stop-opacity=".55"/><stop offset="1" stop-color="#fff" stop-opacity="0"/></radialGradient>
    </defs>
    <circle cx="888.7" cy="10" r="5.8" fill="url(#siri)"/>
    <circle cx="889.2" cy="10.2" r="4" fill="url(#siric)"/>

    <!-- DESIGN icon -->
    <rect x="547.9" y="50.3" width="15.4" height="15.5" rx="0.8" fill="none" stroke="#fff" stroke-width="2"/>
    <path d="M552.9 50.3V65.8M558.2 50.3V65.8M547.9 55.4H563.3M547.9 60.6H563.3" stroke="#fff" stroke-width="1.2" fill="none"/>
    <!-- STORE icon -->
    <circle cx="686" cy="58.3" r="8.6" fill="#b9dbe1"/>
    <path d="M692 52.8C688.5 50.6 682.6 51.6 682.4 55.2C682.2 59.4 690.6 58.6 690 62.8C689.5 66 683.4 66.4 679.4 62.6" fill="none" stroke="#1392a5" stroke-width="1.9" stroke-linecap="round"/>
    <!-- LIBRARY icon -->
    <path d="M797.9 49.4Q797.9 48.4 798.9 48.4H804.6Q805.4 48.4 805.8 49.2L806.5 50.4H816.1Q817.1 50.4 817.1 51.4V65Q817.1 66 816.1 66H798.9Q797.9 66 797.9 65Z" fill="#b9dbe1"/>
    <path d="M806.1 53.8H809.1V57.6H811.6L807.6 62L803.6 57.6H806.1Z" fill="#1392a5"/>
    <!-- SEND icon -->
    <path d="M933.6 53.1C931.2 53.3 931.2 57.4 934.6 57.2M953.8 53.1C956.2 53.3 956.2 57.4 952.8 57.2" fill="none" stroke="#b9dbe1" stroke-width="1.4"/>
    <rect x="933.6" y="51" width="20.2" height="3.6" rx="1.6" fill="#b9dbe1"/>
    <path d="M937.8 54.6H949.6L952.4 65.5H935Z" fill="#b9dbe1"/>
    <path d="M939.6 56.6H947.8L949.6 63H937.8Z" fill="#1392a5" opacity=".35"/>
  </svg>
  <div id="toolbar1" class="abs"></div>
  <div id="toolbar2" class="abs"></div>
  <div id="vscroll" class="abs"></div>
  <div id="vthumb" class="abs"></div>
  <div id="righttools" class="abs"></div>
  <svg id="rticons" class="abs" style="left:1000px;top:96px" width="24" height="430" viewBox="1000 96 24 430">
    <g fill="#8d8d8d">
      <!-- page -->
      <path d="M1006 101.2H1019.9V112L1014.6 117.4H1006Z"/>
      <path d="M1014.9 117.2V112.4H1019.7Z" fill="#fff" stroke="#8d8d8d" stroke-width="0.7"/>
      <!-- mat -->
      <path d="M1004.3 128.6H1022.6V140.5Q1022.6 144.2 1018.9 144.2H1008Q1004.3 144.2 1004.3 140.5Z" fill="#b4b4b4" stroke="#8d8d8d" stroke-width="0.9"/>
      <path d="M1005.5 131.6H1021.5M1005.5 134.1H1021.5M1005.5 136.6H1021.5M1005.5 139.1H1021.5" stroke="#a6a6a6" stroke-width="0.6" fill="none"/>
      <path d="M1010.4 144.6Q1013.4 148.2 1016.5 144.6Z" fill="#a5a5a5" stroke="#8d8d8d" stroke-width="0.7"/>
      <!-- pix -->
      <rect x="1005.6" y="157.6" width="15.3" height="16.8"/>
      <g fill="#fff"><circle cx="1007.4" cy="159.4" r="1"/><circle cx="1019.1" cy="159.4" r="1"/><circle cx="1007.4" cy="172.6" r="1"/><circle cx="1019.1" cy="172.6" r="1"/></g>
      <text x="1006.4" y="170" font-size="10" font-weight="bold" fill="#fff" font-family="Liberation Sans, sans-serif" textLength="13.8" lengthAdjust="spacingAndGlyphs">Pix</text>
      <!-- palette -->
      <path d="M1014.4 186C1019.5 186 1022 189.6 1021.6 193.6C1021.2 198.6 1016.6 202.2 1011.6 202C1008.2 201.8 1007 199.4 1007.6 197.6C1008 196.2 1007.2 195.4 1005.8 195.6C1004.2 195.8 1004.4 193.2 1005.6 191.4C1007.4 188.2 1010.6 186 1014.4 186Z"/>
      <g fill="#fff"><circle cx="1010.4" cy="190.3" r="1.2"/><circle cx="1014.8" cy="188.8" r="1.2"/><circle cx="1018.6" cy="191.4" r="1.3"/><circle cx="1018" cy="196.2" r="1.4"/></g>
      <!-- lines -->
      <path d="M1005.1 216.3H1021.8" stroke="#8d8d8d" stroke-width="1" stroke-dasharray="4 1.8" fill="none"/>
      <rect x="1005.1" y="219.8" width="16.7" height="2.1"/>
      <rect x="1005.1" y="224.5" width="16.7" height="4.5"/>
    </g>
    <!-- trace active -->
    <rect x="1000" y="238" width="24" height="25.8" fill="#18c4e2"/>
    <rect x="1003.4" y="240.6" width="19.6" height="20.8" rx="3.4" fill="none" stroke="#d4f3f9" stroke-width="1.1"/>
    <path d="M1013.20 245.40Q1013.75 244.98 1014.93 244.84C1017.34 244.14 1019.96 244.70 1019.75 247.50C1019.69 248.90 1019.41 250.16 1018.31 251.00C1019.41 251.84 1019.69 253.10 1019.75 254.50C1019.96 257.30 1017.34 257.86 1014.93 257.16Q1013.75 257.02 1013.20 256.60Q1012.65 257.02 1011.48 257.16C1009.06 257.86 1006.44 257.30 1006.65 254.50C1006.71 253.10 1006.99 251.84 1008.09 251.00C1006.99 250.16 1006.71 248.90 1006.65 247.50C1006.44 244.70 1009.06 244.14 1011.48 244.84Q1012.65 244.98 1013.20 245.40Z" fill="#b4e9f5" stroke="#fff" stroke-width="1.4"/>
    <g fill="#8d8d8d">
      <!-- contrast -->
      <circle cx="1013.2" cy="279.2" r="7.9" fill="#fff" stroke="#8d8d8d" stroke-width="1.3"/>
      <path d="M1013.8 271.4A7.9 7.9 0 0 1 1013.8 287Z" fill="#9a9a9a"/>
      <!-- A| -->
      <text x="1004.4" y="314.2" font-size="21" font-family="Liberation Serif, serif" fill="#8d8d8d">A</text>
      <rect x="1021.3" y="297.8" width="1" height="17.4"/>
      <!-- align -->
      <rect x="1003.6" y="335" width="21" height="0.8"/>
      <rect x="1005.8" y="329.5" width="3.4" height="11.5"/>
      <rect x="1011.6" y="331.6" width="3.3" height="7.6"/>
      <rect x="1017.5" y="327.6" width="3.5" height="15.7"/>
      <!-- replicate -->
      <ellipse cx="1013.4" cy="363.4" rx="9.2" ry="2.3" transform="rotate(44 1013.4 363.4)"/>
      <ellipse cx="1015.2" cy="357.4" rx="2.6" ry="1" transform="rotate(-62 1015.2 357.4)"/>
      <ellipse cx="1019.4" cy="361.8" rx="2.8" ry="1" transform="rotate(-22 1019.4 361.8)"/>
      <ellipse cx="1007.4" cy="365.2" rx="2.8" ry="1" transform="rotate(-22 1007.4 365.2)"/>
      <ellipse cx="1011.6" cy="369.6" rx="2.6" ry="1" transform="rotate(-62 1011.6 369.6)"/>
      <!-- modify -->
      <circle cx="1017.6" cy="389.4" r="4.7"/>
      <rect x="1005.1" y="389.8" width="12" height="8.6" stroke="#fff" stroke-width="0"/>
      <path d="M1012.9 394.1V389.3H1017.6V394.1Z" fill="none" stroke="#fff" stroke-width="1"/>
      <!-- offset star -->
      <path d="M1013.2 411.6L1016.3 417.0L1022.3 418.2L1018.1 422.8L1018.8 429.0L1013.2 426.4L1007.6 429.0L1008.3 422.8L1004.1 418.2L1010.1 417.0Z" fill="#fff" stroke="#8d8d8d" stroke-width="1.1" stroke-linejoin="round"/>
      <path d="M1013.2 415.2L1015.0 418.8L1018.9 419.3L1016.1 422.1L1016.7 426.1L1013.2 424.2L1009.7 426.1L1010.3 422.1L1007.5 419.3L1011.4 418.8Z" fill="#999" stroke="#8d8d8d" stroke-width="0.8" stroke-linejoin="round"/>
      <!-- heart -->
      <rect x="1004.8" y="440.8" width="13.9" height="11.3"/>
      <path d="M1008 453H1019.5L1022.4 456H1011.5Z"/>
      <path d="M1015 451.4C1011.8 449 1010.4 447.4 1010.4 445.8C1010.4 443.6 1013.4 442.8 1015 445C1016.6 442.8 1019.6 443.6 1019.6 445.8C1019.6 447.4 1018.2 449 1015 451.4Z" fill="#8d8d8d" stroke="#fff" stroke-width="1.1"/>
      <!-- dots -->
      <circle cx="1013.6" cy="469.1" r="1.25"/><circle cx="1004.8" cy="474.8" r="1.25"/><circle cx="1010.5" cy="473.2" r="1.25"/><circle cx="1015.9" cy="473.2" r="1.25"/><circle cx="1021.2" cy="474.8" r="1.25"/><circle cx="1008.3" cy="478.9" r="1.25"/><circle cx="1017.9" cy="478.9" r="1.25"/><circle cx="1013.2" cy="482.2" r="1.25"/><circle cx="1008" cy="484" r="1.25"/><circle cx="1018.1" cy="484" r="1.25"/>
      <!-- sketch -->
      <path d="M1006.6 503.4L1013.8 498M1007.6 509.6L1019.8 498.4M1011.4 511L1021.2 502.6M1016.4 511.4L1021 507.4" stroke="#8d8d8d" stroke-width="1.5" fill="none" stroke-linecap="round"/>
    </g>
  </svg>

</div>
</body>
</html>
